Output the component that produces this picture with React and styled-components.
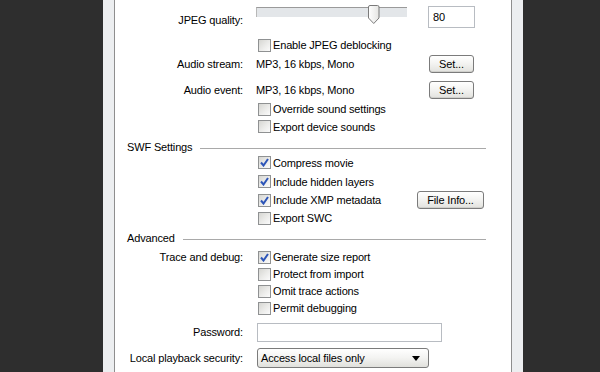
import React from "react";
import styled, { createGlobalStyle } from "styled-components";

const Global = createGlobalStyle`
  html, body { margin: 0; padding: 0; background: #2e2e2e; }
  body { font-family: "Liberation Sans", Arial, sans-serif; font-size: 11px; letter-spacing: -0.15px; color: #000; }
`;

const Stage = styled.div`
  width: 600px;
  height: 372px;
  overflow: hidden;
  background: #2e2e2e;
  display: flex;
`;

const Frame = styled.div`
  margin-left: 103px;
  width: 420px;
  height: 372px;
  background: #eceef0;
  padding: 0 11px;
  box-sizing: border-box;
  display: flex;
`;

const Panel = styled.div`
  flex: 1;
  background: #fff;
  border-left: 1px solid #8e8e8e;
  border-right: 1px solid #8e8e8e;
  padding: 0 25px 0 12px;
  overflow: hidden;
`;

const Form = styled.div`
  display: flex;
  flex-direction: column;
  margin-top: -12px;
`;

const Heading = styled.div`
  display: flex;
  align-items: center;
  gap: 8px;
  height: 12px;
  margin-top: ${(p) => p.$mt || 0}px;
  font-size: 11px;
  white-space: nowrap;
  & > span { line-height: 12px; }
  &::after {
    content: "";
    flex: 1;
    border-top: 1px solid #a9a9a9;
    margin-top: 2px;
  }
`;

const Row = styled.div`
  display: grid;
  grid-template-columns: 116px 1fr;
  column-gap: 13px;
  height: ${(p) => p.$h}px;
  margin-top: ${(p) => p.$mt || 0}px;
  align-items: center;
`;

const Label = styled.div`
  text-align: right;
  white-space: nowrap;
  align-self: ${(p) => (p.$top ? "start" : "center")};
  padding-top: ${(p) => p.$top || 0}px;
  line-height: 13px;
`;

const Control = styled.div`
  display: flex;
  align-items: center;
  height: 100%;
  white-space: nowrap;
`;

const Trail = styled.div`
  margin-left: auto;
  margin-right: ${(p) => p.$mr}px;
  display: flex;
`;

const Button = styled.button`
  font-family: inherit;
  font-size: 11px;
  letter-spacing: inherit;
  color: #000;
  height: ${(p) => p.$h || 18}px;
  width: ${(p) => p.$w}px;
  padding: 0;
  border: 1px solid #7b7b7b;
  border-radius: 3px;
  background: linear-gradient(#ffffff 0%, #f4f4f2 45%, #e2e2de 100%);
  box-shadow: inset 0 -1px 0 #d0d0cc;
  display: flex;
  align-items: center;
  justify-content: center;
`;

const TextInput = styled.div`
  box-sizing: border-box;
  width: ${(p) => p.$w}px;
  height: ${(p) => p.$h}px;
  border: 1px solid #b8bcc2;
  background: #fff;
  padding-left: 4px;
  display: flex;
  align-items: center;
  margin-left: ${(p) => p.$ml || 0}px;
`;

const Select = styled.div`
  box-sizing: border-box;
  margin-left: 1px;
  width: 172px;
  height: 20px;
  border: 1px solid #7b7b7b;
  border-radius: 3px;
  background: linear-gradient(#ffffff 0%, #f3f3f1 50%, #e0e0dc 100%);
  display: flex;
  align-items: center;
  justify-content: space-between;
  padding: 0 8px 0 3px;
`;

const Arrow = styled.span`
  width: 0;
  height: 0;
  border-left: 4px solid transparent;
  border-right: 4px solid transparent;
  border-top: 5px solid #000;
`;

const CheckWrap = styled.label`
  display: flex;
  align-items: center;
  gap: 2px;
  margin-left: 2px;
`;

const Box = styled.span`
  box-sizing: border-box;
  width: 13px;
  height: 13px;
  border: 1px solid #8f9192;
  background: linear-gradient(135deg, #d6d6d2 0%, #ececea 55%, #fbfbfb 100%);
  display: flex;
  align-items: center;
  justify-content: center;
`;

const SliderWrap = styled.div`
  position: relative;
  width: 151px;
  height: 22px;
  align-self: start;
`;

const Track = styled.div`
  margin-top: 1px;
  height: 10px;
  box-sizing: border-box;
  background: #e3e6e9;
  border-top: 1px solid #9a9a9a;
  border-left: 1px solid #b8b8b8;
`;

const Thumb = styled.svg`
  position: absolute;
  left: 112px;
  top: -1px;
`;

function Check({ checked, children }) {
  return (
    <CheckWrap>
      <Box>
        {checked && (
          <svg width="9" height="9" viewBox="0 0 9 9">
            <path d="M1 4.5 L3.5 7.5 L8 1" fill="none" stroke="#2d55b8" strokeWidth="2" />
          </svg>
        )}
      </Box>
      <span>{children}</span>
    </CheckWrap>
  );
}

export default function App() {
  return (
    <>
      <Global />
      <Stage>
        <Frame>
          <Panel>
            <Form>
              <Heading><span>Images and Sounds</span></Heading>
              <Row $h={22} $mt={6}>
                <Label $top={8}>JPEG quality:</Label>
                <Control>
                  <SliderWrap>
                    <Track />
                    <Thumb width="12" height="19" viewBox="0 0 12 19">
                      <defs>
                        <linearGradient id="tg" x1="0" y1="0" x2="1" y2="0">
                          <stop offset="0" stopColor="#ffffff" />
                          <stop offset="1" stopColor="#e4e4e2" />
                        </linearGradient>
                      </defs>
                      <path d="M0.5 2 Q0.5 0.5 2 0.5 H9.5 Q11 0.5 11 2 V13 L5.75 18.5 L0.5 13 Z" fill="url(#tg)" stroke="#7a7a7a" />
                    </Thumb>
                  </SliderWrap>
                  <Trail $mr={11}>
                    <TextInput $w={47} $h={22}>80</TextInput>
                  </Trail>
                </Control>
              </Row>
              <Row $h={18} $mt={8}>
                <span />
                <Control><Check>Enable JPEG deblocking</Check></Control>
              </Row>
              <Row $h={20}>
                <Label>Audio stream:</Label>
                <Control>
                  MP3, 16 kbps, Mono
                  <Trail $mr={12}><Button $w={45}>Set...</Button></Trail>
                </Control>
              </Row>
              <Row $h={20} $mt={6}>
                <Label>Audio event:</Label>
                <Control>
                  MP3, 16 kbps, Mono
                  <Trail $mr={12}><Button $w={45}>Set...</Button></Trail>
                </Control>
              </Row>
              <Row $h={18}>
                <span />
                <Control><Check>Override sound settings</Check></Control>
              </Row>
              <Row $h={17}>
                <span />
                <Control><Check>Export device sounds</Check></Control>
              </Row>
              <Heading $mt={6}><span>SWF Settings</span></Heading>
              <Row $h={19}>
                <span />
                <Control><Check checked>Compress movie</Check></Control>
              </Row>
              <Row $h={19}>
                <span />
                <Control><Check checked>Include hidden layers</Check></Control>
              </Row>
              <Row $h={18}>
                <span />
                <Control>
                  <Check checked>Include XMP metadata</Check>
                  <Trail $mr={2}><Button $w={67}>File Info...</Button></Trail>
                </Control>
              </Row>
              <Row $h={18}>
                <span />
                <Control><Check>Export SWC</Check></Control>
              </Row>
              <Heading $mt={5}><span>Advanced</span></Heading>
              <Row $h={18} $mt={4}>
                <Label>Trace and debug:</Label>
                <Control><Check checked>Generate size report</Check></Control>
              </Row>
              <Row $h={16}>
                <span />
                <Control><Check>Protect from import</Check></Control>
              </Row>
              <Row $h={18}>
                <span />
                <Control><Check>Omit trace actions</Check></Control>
              </Row>
              <Row $h={16}>
                <span />
                <Control><Check>Permit debugging</Check></Control>
              </Row>
              <Row $h={19} $mt={7}>
                <Label>Password:</Label>
                <Control><TextInput $w={185} $h={19} $ml={1} /></Control>
              </Row>
              <Row $h={20} $mt={6}>
                <Label>Local playback security:</Label>
                <Control>
                  <Select>
                    <span>Access local files only</span>
                    <Arrow />
                  </Select>
                </Control>
              </Row>
            </Form>
          </Panel>
        </Frame>
      </Stage>
    </>
  );
}
